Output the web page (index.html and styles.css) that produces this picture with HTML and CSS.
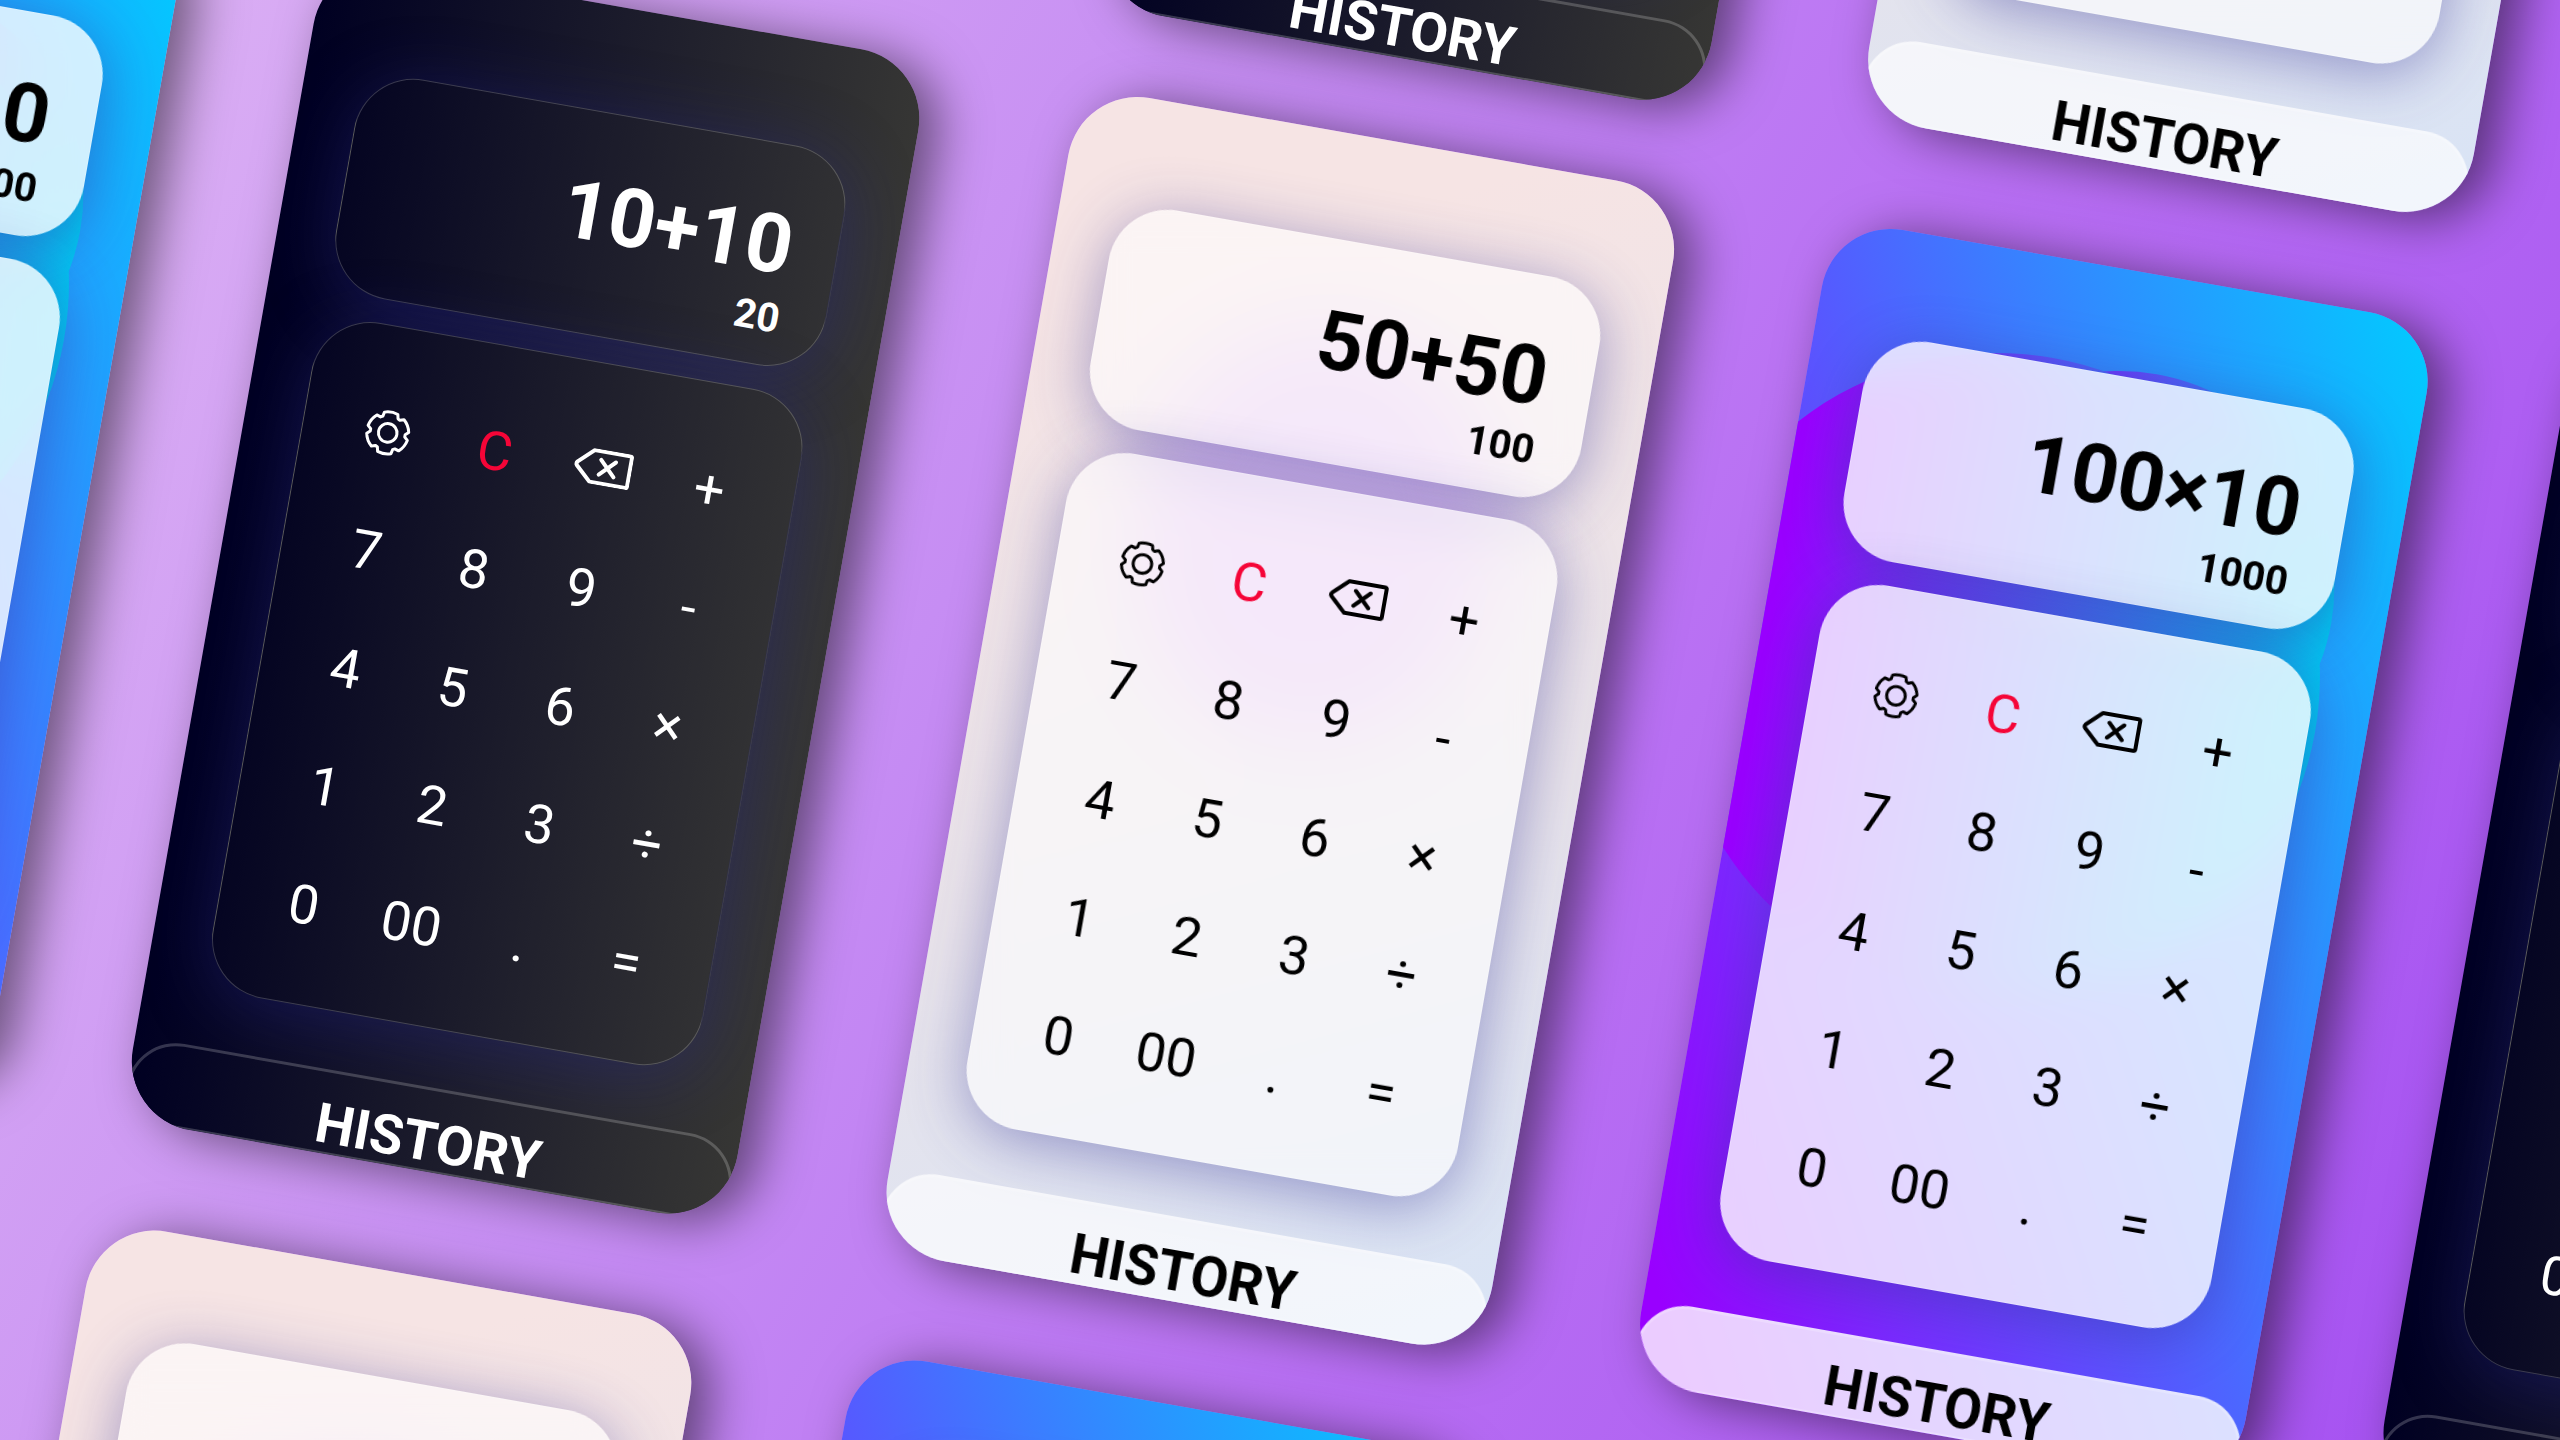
FILE: index.html
```
<!DOCTYPE html>
<html lang="en">
<head>
<meta charset="utf-8">
<title>Calculator themes</title>
<link rel="stylesheet" href="styles.css">
</head>
<body>
<svg class="sprite" aria-hidden="true">
  <symbol id="gear" viewBox="-24 -24 48 48">
    <path d="M-7.700-15.700L-6.800-19.900A21 21 0 0 1 6.800-19.900L7.700-15.700L9.800-14.500L13.800-15.800A21 21 0 0 1 20.600-4L17.500-1.200V1.200L20.600 4A21 21 0 0 1 13.800 15.800L9.800 14.500L7.700 15.700L6.800 19.900A21 21 0 0 1-6.800 19.900L-7.700 15.700L-9.800 14.500L-13.800 15.800A21 21 0 0 1-20.600 4L-17.500 1.200V-1.200L-20.600-4A21 21 0 0 1-13.800-15.800L-9.800-14.500z"/>
    <circle r="9.300"/>
  </symbol>
  <symbol id="back" viewBox="0 0 58 36">
    <path d="M18 2h36a2 2 0 0 1 2 2v28a2 2 0 0 1-2 2H18L3 20a3 3 0 0 1 0-4zM26 10.500l15 15M41 10.500l-15 15"/>
  </symbol>
</svg>
<main class="scene"><div class="wall" id="wall"></div></main>
<template id="calculator">
  <article class="card">
    <div class="screen"><output class="sum"></output><output class="result"></output></div>
    <div class="pad">
      <button class="key" aria-label="Settings"><svg class="gear"><use href="#gear"/></svg></button>
      <button class="key clear">C</button>
      <button class="key" aria-label="Backspace"><svg class="back"><use href="#back"/></svg></button>
      <button class="key">+</button>
      <button class="key">7</button><button class="key">8</button><button class="key">9</button><button class="key">-</button>
      <button class="key">4</button><button class="key">5</button><button class="key">6</button><button class="key">×</button>
      <button class="key">1</button><button class="key">2</button><button class="key">3</button><button class="key">÷</button>
      <button class="key">0</button><button class="key">00</button><button class="key">.</button><button class="key">=</button>
    </div>
    <button class="history">HISTORY</button>
  </article>
</template>
<script src="app.js"></script>
</body>
</html>
```
FILE: app.js
```
const themes = {
  dark: ["10+10", "20"],
  light: ["50+50", "100"],
  blue: ["100×10", "1000"],
};

const columns = [
  ["one", ["blue"]],
  ["two", ["dark", "light"]],
  ["three", ["dark", "light", "blue"]],
  ["four", ["light", "blue"]],
  ["five", ["dark"]],
];

const wall = document.getElementById("wall");
const template = document.getElementById("calculator");

for (const [name, cards] of columns) {
  const column = document.createElement("div");
  column.className = "column " + name;
  for (const theme of cards) {
    const card = template.content.cloneNode(true).firstElementChild;
    card.classList.add(theme);
    card.querySelector(".sum").textContent = themes[theme][0];
    card.querySelector(".result").textContent = themes[theme][1];
    column.append(card);
  }
  wall.append(column);
}
```
FILE: styles.css
```
* { box-sizing: border-box; }
body { margin: 0; font-family: Roboto, sans-serif; }
.sprite { display: none; }

.scene {
  height: 100vh;
  overflow: hidden;
  background: linear-gradient(120deg, #ddb3f4 0%, #c68df3 38%, #b86ff3 62%, #a44ff1 100%);
}

/* the wall of phones is tilted about the top left corner of the window */
.wall {
  display: flex;
  align-items: flex-start;
  gap: 137px;
  width: max-content;
  margin-left: -441px;
  transform: rotate(10deg);
  transform-origin: 441px 0;
}
.column { display: flex; flex-direction: column; gap: 104px; width: 614px; }
.one { margin-top: -100px; }
.two { margin-top: -101px; margin-left: 3px; }
.three { margin-top: -1367px; margin-left: 15px; gap: 102px; }
.three .dark { margin-bottom: -19px; }
.four { margin-top: -1389px; margin-left: 14px; }
.five { margin-top: -126px; }
.two .light { margin-left: -5px; margin-right: 5px; }
.four .light { margin-left: 5px; margin-right: -5px; }

.card {
  position: relative;
  display: flex;
  flex-direction: column;
  gap: 24px;
  padding-top: 106px;
  border-radius: 70px;
  overflow: hidden;
  color: #000;
  box-shadow: 20px 4px 50px rgba(0, 0, 0, .5);
}
.dark { background: linear-gradient(90deg, #000022, #363634); color: #fff; }
.light { background: linear-gradient(155deg, #f6e4e4 15%, #e8e3ea 60%, #d8e4f6); }
.blue { background: linear-gradient(to top right, #9900ff 5%, #00ccff); }

.blue::before, .blue::after, .light::before {
  content: "";
  position: absolute;
  border-radius: 50%;
  background: linear-gradient(90deg, #9900ff 14%, #00c8f2);
}
.blue::before { left: 130px; top: 98px; width: 430px; height: 430px; }
.blue::after { left: -83px; top: 100px; width: 646px; height: 646px; }
.light::before {
  left: 130px; top: 190px; width: 360px; height: 420px;
  background: #e6c6f2;
  filter: blur(40px);
}

.screen, .pad {
  position: relative;
  z-index: 1;
  width: 498px;
  margin: 0 auto;
  border: 1px solid rgba(255, 255, 255, .2);
  border-radius: 60px;
  box-shadow: 2px 10px 60px rgba(50, 50, 150, .45);
}
.light .screen, .light .pad { background: rgba(255, 255, 255, .6); backdrop-filter: blur(24px); }
.blue .screen, .blue .pad { background: rgba(255, 255, 255, .8); backdrop-filter: blur(24px); }
.dark .screen, .dark .pad {
  background: linear-gradient(90deg, #050522, #313133);
  box-shadow: 2px 10px 70px rgba(40, 40, 160, .35);
}

.screen {
  display: flex;
  flex-direction: column;
  align-items: flex-end;
  height: 223px;
  padding: 52px 45px 0;
  font-weight: 700;
}
.sum { font-size: 82px; line-height: 96px; }
.result { font-size: 40px; line-height: 52px; }

.pad {
  display: grid;
  grid-template-columns: repeat(4, 1fr);
  grid-auto-rows: 120px;
  height: 686px;
  padding: 46px 30px 0;
}
.key {
  display: flex;
  align-items: center;
  justify-content: center;
  padding: 0;
  border: 0;
  background: none;
  color: inherit;
  font: 400 54px/64px Roboto, sans-serif;
}
.clear { color: #f50537; }
.key svg { fill: none; stroke: currentColor; stroke-linejoin: round; stroke-linecap: round; }
.gear { width: 48px; height: 48px; stroke-width: 3; }
.back { width: 58px; height: 36px; margin-bottom: 6px; stroke-width: 4; overflow: visible; }

.history {
  position: relative;
  z-index: 1;
  height: 84px;
  margin-top: 34px;
  padding: 22px 0 0;
  border: 3px solid rgba(255, 255, 255, .2);
  border-bottom-width: 2px;
  border-radius: 50px 50px 0 0;
  background: rgba(255, 255, 255, .65);
  color: inherit;
  font: 700 55px/54px Roboto, sans-serif;
}
.blue .history { background: rgba(255, 255, 255, .8); }
.dark .history { background: linear-gradient(90deg, #000022, #363634); }
```
